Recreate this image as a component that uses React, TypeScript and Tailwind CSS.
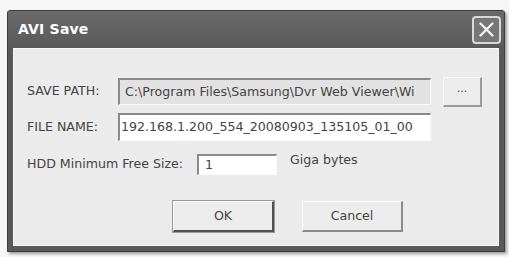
import React from 'react';

const font = { fontFamily: '"DejaVu Sans", Tahoma, sans-serif' };

function App() {
  return (
    <div className="w-[509px] h-[257px] bg-[#f6f6f6] pt-[10px] pl-[7px]" style={font}>
      {/* Window frame */}
      <div className="w-[498px] h-[242px] flex flex-col bg-[#595959] border border-[#3a3a3a] rounded-tl-[3px] rounded-tr-[3px] shadow-[2px_2px_3px_rgba(0,0,0,0.35)]">
        {/* Title bar */}
        <div className="h-[37px] flex items-center justify-between pl-[10px] pr-[3px] bg-gradient-to-b from-[#6a6a6a] to-[#5a5a5a]">
          <span className="text-white font-bold text-[14px] tracking-[0.2px]">AVI Save</span>
          <div className="w-[29px] h-[28px] rounded-[4px] border-2 border-[#d8d8d8] bg-[#767676] flex items-center justify-center">
            <svg width="17" height="17" viewBox="0 0 17 17">
              <path d="M2.5 2.5 L14.5 14.5 M14.5 2.5 L2.5 14.5" stroke="#f2f2f2" strokeWidth="2.4" strokeLinecap="round" />
            </svg>
          </div>
        </div>

        {/* Body */}
        <div className="flex-1 mx-[5px] mb-[5px] bg-[#ebebeb] border border-[#f8f8f8] pt-[29px] pl-[13px] text-[12.6px] text-[#444444]">
          <div className="flex items-center h-[27px]">
            <span className="w-[91px]">SAVE PATH:</span>
            <div className="w-[313px] h-[27px] bg-[#e2e2e2] border-t-2 border-l-2 border-[#8a8a8a] border-b border-r border-b-[#fafafa] border-r-[#fafafa] flex items-center pl-[5px] overflow-hidden whitespace-nowrap">
              C:\Program Files\Samsung\Dvr Web Viewer\Wi
            </div>
            <div className="ml-[12px] w-[39px] h-[30px] bg-[#ececec] border-t border-l border-[#fafafa] border-b-2 border-r-2 border-b-[#9a9a9a] border-r-[#9a9a9a] flex items-center justify-center text-[11px] pb-[3px]">
              ...
            </div>
          </div>

          <div className="flex items-center mt-[8px] h-[28px]">
            <span className="w-[91px]">FILE NAME:</span>
            <div className="w-[313px] h-[28px] bg-white border-t-2 border-l-2 border-[#8a8a8a] border-b border-r border-b-[#fafafa] border-r-[#fafafa] flex items-center pl-[1px] overflow-hidden whitespace-nowrap">
              192.168.1.200_554_20080903_135105_01_00
            </div>
          </div>

          <div className="flex items-center mt-[13px] h-[21px]">
            <span className="w-[170px]">HDD Minimum Free Size:</span>
            <div className="w-[80px] h-[21px] bg-white border-t-2 border-l-2 border-[#8a8a8a] border-b border-r border-b-[#fafafa] border-r-[#fafafa] flex items-center pl-[6px]">
              1
            </div>
            <span className="ml-[13px] self-start -mt-[3px]">Giga bytes</span>
          </div>

          <div className="flex gap-[28px] mt-[26px] pl-[146px]">
            <div className="w-[101px] h-[31px] bg-[#ececec] border-t border-l border-[#fafafa] border-b-2 border-r-2 border-b-[#505050] border-r-[#505050] outline outline-1 outline-[#9a9a9a] flex items-center justify-center">
              OK
            </div>
            <div className="w-[101px] h-[31px] bg-[#ececec] border-t border-l border-[#fafafa] border-b-2 border-r-2 border-b-[#8a8a8a] border-r-[#8a8a8a] flex items-center justify-center">
              Cancel
            </div>
          </div>
        </div>
      </div>
    </div>
  );
}

export default App;
